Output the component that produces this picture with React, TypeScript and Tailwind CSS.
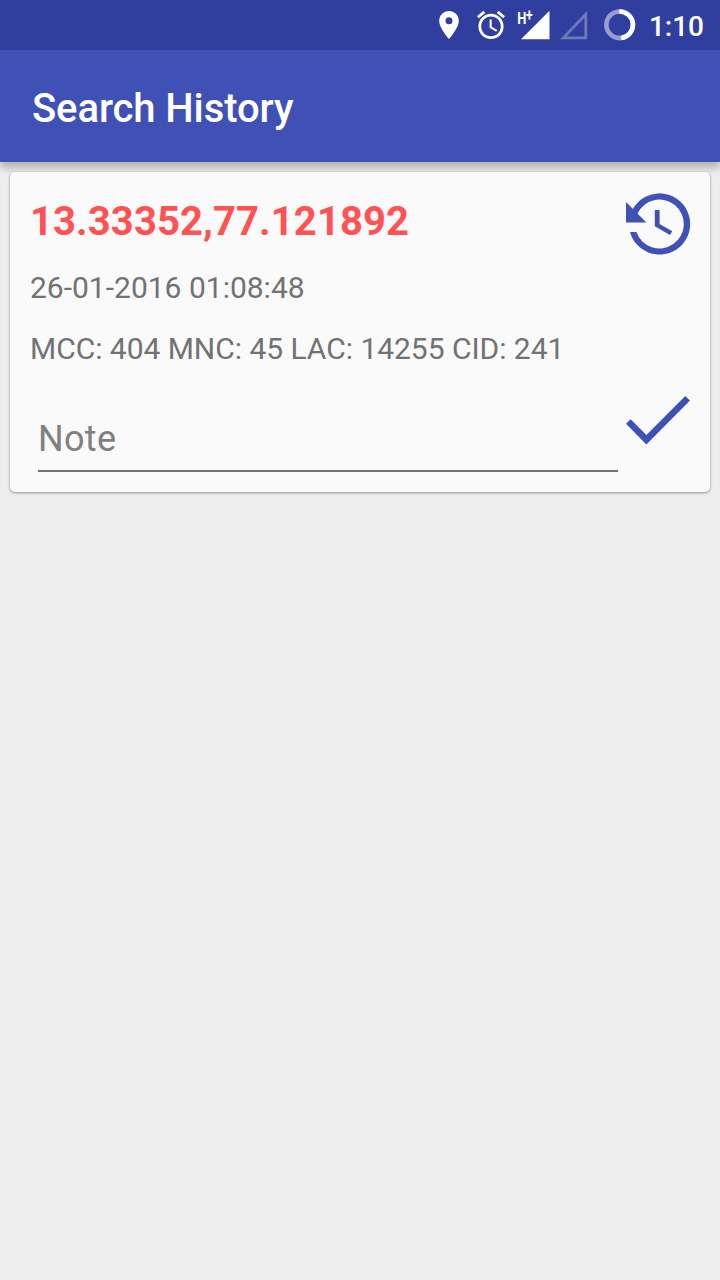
import { useState } from "react";

type HistoryEntry = {
  coords: string;
  date: string;
  cell: string;
};

const entries: HistoryEntry[] = [
  {
    coords: "13.33352,77.121892",
    date: "26-01-2016 01:08:48",
    cell: "MCC: 404 MNC: 45 LAC: 14255 CID: 241",
  },
];

const StatusBar = () => (
  <div className="flex h-[50px] items-center justify-end bg-[#303f9f] pr-4 text-white">
    <svg width="34" height="50" viewBox="0 0 34 50" fill="currentColor">
      <path
        transform="translate(0.2 8.2) scale(1.4)"
        d="M12 2C8.13 2 5 5.13 5 9c0 5.25 7 13 7 13s7-7.75 7-13c0-3.87-3.13-7-7-7zm0 9.5a2.5 2.5 0 0 1 0-5 2.5 2.5 0 0 1 0 5z"
      />
    </svg>
    <svg className="ml-2" width="34" height="50" viewBox="0 0 34 50" fill="currentColor">
      <path
        transform="translate(0.2 8.2) scale(1.4)"
        d="M22 5.72l-4.6-3.86-1.29 1.53 4.6 3.86L22 5.72zM7.88 3.39L6.6 1.86 2 5.71l1.29 1.53 4.59-3.85zM12.5 8H11v6l4.75 2.85.75-1.23-4-2.37V8zM12 4c-4.97 0-9 4.03-9 9s4.02 9 9 9c4.97 0 9-4.03 9-9s-4.03-9-9-9zm0 16c-3.87 0-7-3.13-7-7s3.13-7 7-7 7 3.13 7 7-3.13 7-7 7z"
      />
    </svg>
    <svg className="ml-2" width="34" height="50" viewBox="0 0 34 50" fill="currentColor">
      <path d="M5 39.3h28.5V10.8z" />
      <text transform="translate(1.2 23.8) scale(0.76 1)" className="text-[17px] font-bold">
        H<tspan dy="-2.5" dx="-0.5" className="text-[16px]">+</tspan>
      </text>
    </svg>
    <svg className="ml-2" width="34" height="50" viewBox="0 0 34 50" fill="none">
      <path d="M5.4 37.8H27.8V14.2z" stroke="white" strokeOpacity="0.3" strokeWidth="2.8" />
    </svg>
    <svg className="ml-3" width="34" height="50" viewBox="0 0 34 50" fill="none" strokeWidth="4.6">
      <circle cx="15.7" cy="24.8" r="13.3" stroke="white" strokeOpacity="0.5" />
      <path d="M15.2 11.5A13.3 13.3 0 0 1 17.2 38" stroke="white" />
    </svg>
    <span className="ml-[11px] mt-[4px] text-[28px] leading-none font-medium">1:10</span>
  </div>
);

const HistoryIcon = () => (
  <svg width="64" height="64" viewBox="0 0 64 64" fill="currentColor">
    <path d="M4.6 22A30.6 30.6 0 1 1 4 40H10.4A24.4 24.4 0 1 0 11.2 22z" />
    <path d="M0 10v20.4h20.4z" />
    <path d="M28.8 18h4.8v14l12.7 7.2-2.4 3.7-15.1-8.6z" />
  </svg>
);

const CheckIcon = () => (
  <svg width="64" height="64" viewBox="0 0 64 64" fill="currentColor">
    <path d="M0 30.8l4.6-4.6 15.8 15.7L59.3 3l4.7 4.6-43.6 43.9z" />
  </svg>
);

const HistoryCard = ({ entry }: { entry: HistoryEntry }) => {
  const [note, setNote] = useState("");

  return (
    <div className="flex h-80 justify-between rounded-[5px] bg-[#fafafa] pr-5 pl-5 shadow-[0_1px_3px_rgba(0,0,0,0.4)]">
      <div className="flex w-[596px] flex-col text-[#727272]">
        <h2 className="mt-[26px] text-[40px] leading-[47px] font-bold tracking-[0.1px] text-[#ff5252]">{entry.coords}</h2>
        <p className="mt-[25px] text-[30px] leading-[35px]">{entry.date}</p>
        <p className="mt-[26px] text-[30px] leading-[35px] tracking-[-0.03px]">{entry.cell}</p>
        <input
          value={note}
          onChange={(e) => setNote(e.target.value)}
          placeholder="Note"
          className="mt-[40px] ml-2 h-[66px] w-[580px] border-b-2 border-[#727272] pt-[2px] text-[36px] tracking-[0.3px] outline-none placeholder:text-[#808080]"
        />
      </div>
      <div className="flex flex-col text-[#3f51b5]">
        <button className="mt-5">
          <HistoryIcon />
        </button>
        <button className="mt-[137px]">
          <CheckIcon />
        </button>
      </div>
    </div>
  );
};

const App = () => (
  <div className="flex min-h-screen flex-col bg-[#eeeeee] font-['Roboto',sans-serif]">
    <StatusBar />
    <header className="flex h-28 items-center bg-[#3f51b5] px-8 shadow-[0_6px_8px_rgba(0,0,0,0.25)]">
      <h1 className="mt-1.5 text-[40px] leading-none font-medium tracking-[-0.1px] text-white">Search History</h1>
    </header>
    <main className="flex flex-col gap-2.5 p-2.5">
      {entries.map((entry) => (
        <HistoryCard key={entry.coords} entry={entry} />
      ))}
    </main>
  </div>
);

export default App;
